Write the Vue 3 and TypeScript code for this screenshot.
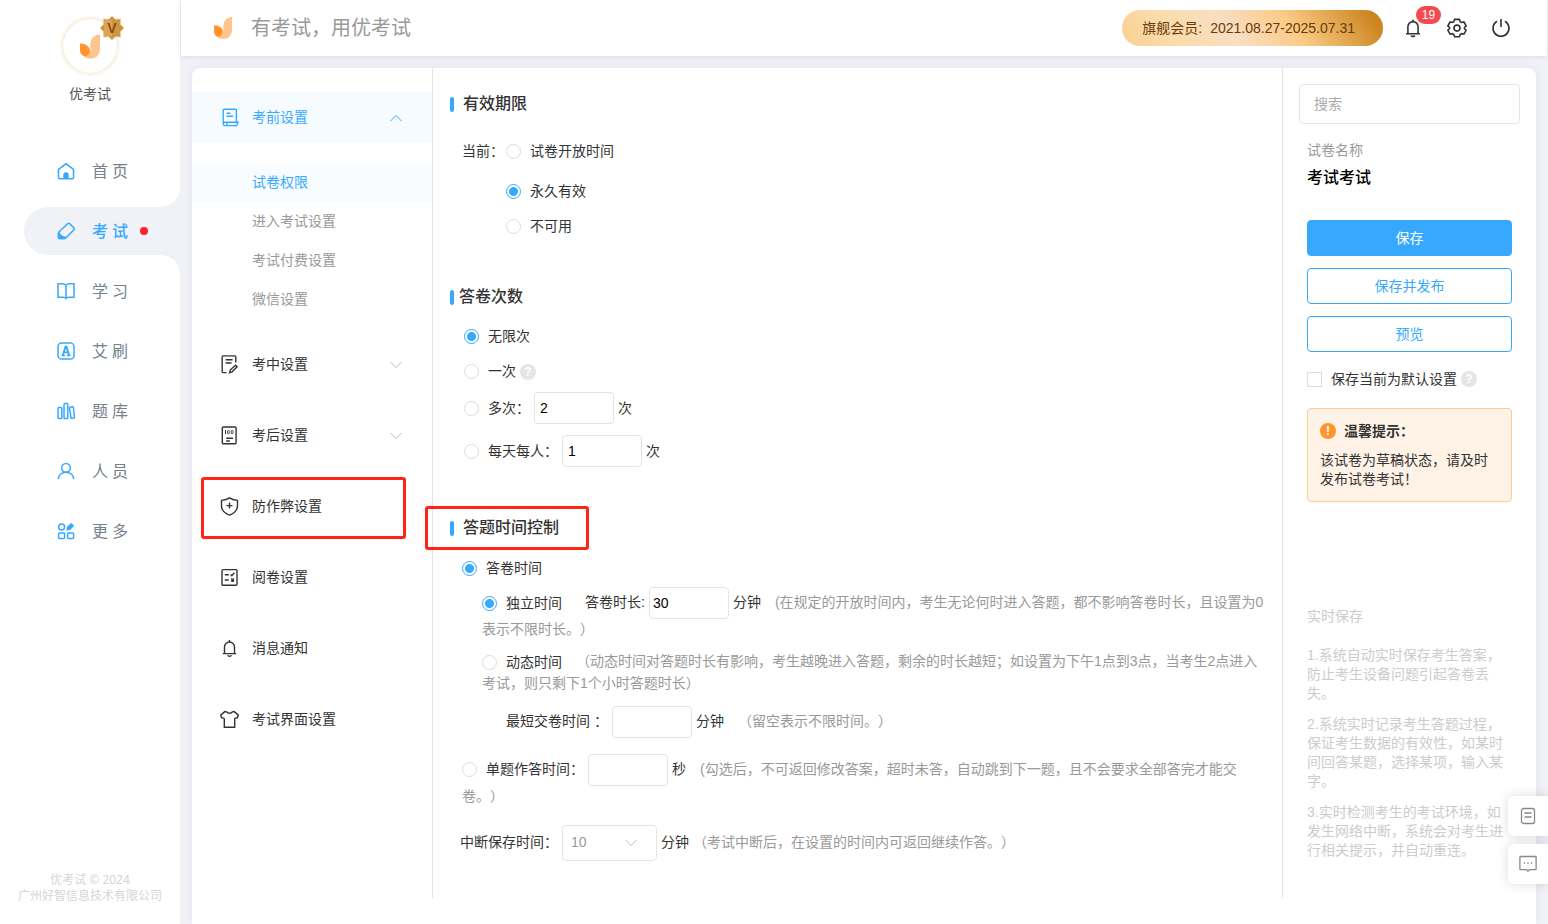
<script setup lang="ts">
import { ref } from 'vue'

interface MenuItem {
  label: string
  icon: string
  active?: boolean
  dot?: boolean
}

interface SettingItem {
  label: string
  icon: string
  open?: boolean
  expandable?: boolean
  marked?: boolean
  children?: string[]
}

const menu: MenuItem[] = [
  {
    label: '首页',
    icon: '<path d="M1.500 7.400 9 1.800l7.500 5.600v8.400a1 1 0 0 1-1 1h-13a1 1 0 0 1-1-1z"/><path d="M6.300 16.800v-3.900a2.700 2.700 0 0 1 5.400 0v3.900z" fill="currentColor" stroke="none"/>',
  },
  {
    label: '考试',
    icon: '<path d="M10.600 1.800a1.600 1.600 0 0 1 2.200 0l3.900 4a1.600 1.600 0 0 1 0 2.200l-7.400 7.600a2.400 2.400 0 0 1-1.800.8H3.200a1.800 1.800 0 0 1-1.800-1.800v-3.200a2.400 2.400 0 0 1 .7-1.700z"/><path d="M2 10c.4 2.600 2.500 4.700 5.800 5.200l-.8 1.300H3.300a1.800 1.800 0 0 1-1.800-1.800z" fill="currentColor"/>',
    active: true,
    dot: true,
  },
  {
    label: '学习',
    icon: '<path d="M9 3.200C8.300 2.200 7 1.800 5.500 1.800H1v13.400h5.200c1.300 0 2.300.3 2.800 1.200.5-.9 1.500-1.200 2.800-1.200H17V1.800h-4.500C11 1.800 9.700 2.200 9 3.200zM9 3.200v13"/>',
  },
  {
    label: '艾刷',
    icon: '<rect x="1" y="1" width="16" height="16" rx="3.600"/><path d="M4.600 13.400h3.200M10.200 13.400h3.200M5.800 13.200 8.500 4.800h1l2.700 8.400M6.800 10.400h4.400" stroke-width="1.900"/>',
  },
  {
    label: '题库',
    icon: '<rect x="1" y="5.400" width="3.800" height="11.200" rx=".8"/><rect x="7" y="1.600" width="3.800" height="15" rx=".8"/><path d="m13 5.200 2.600-.4c.4 0 .7.200.8.600l1 9.800c0 .5-.2.800-.6.900l-2 .3c-.4 0-.7-.2-.8-.6l-1.500-9.700c0-.5.100-.8.500-.9z"/>',
  },
  {
    label: '人员',
    icon: '<circle cx="9" cy="5.800" r="4.400"/><path d="M1.200 17.200c.5-4.200 3.700-7 7.800-7s7.300 2.800 7.800 7"/>',
  },
  {
    label: '更多',
    icon: '<circle cx="4.600" cy="4.900" r="3"/><rect x="1.600" y="11" width="6" height="5.600" rx="1"/><rect x="10.600" y="11" width="6" height="5.600" rx="1"/><path d="m10.800 5 2.900-2.700a.8.800 0 0 1 1.100 0l1 .9a.8.800 0 0 1 0 1.100L13 7.100l-2.700.6z" fill="currentColor"/>',
  },
]

const settings: SettingItem[] = [
  {
    label: '考前设置',
    icon: '<path d="M3.200 15.400V2.200a1 1 0 0 1 1-1h11.200a1 1 0 0 1 1 1v12M6.600 5.200h3.800M6.600 8.200h6.600M5 17.600a1.700 1.700 0 0 1 0-3.400h13c-.6 1-.6 2.400-1.400 3.400zM6.800 14.400v3"/>',
    open: true,
    expandable: true,
    children: ['试卷权限', '进入考试设置', '考试付费设置', '微信设置'],
  },
  {
    label: '考中设置',
    icon: '<path d="M6.500 17.600H3.200a1 1 0 0 1-1-1V1.900a1 1 0 0 1 1-1h11.600a1 1 0 0 1 1 1v5.600M5.600 4.800h7M5.600 8h6M9.600 17.600l.8-2.800 5.200-4.600 1.500 1.600-5 5z"/>',
    expandable: true,
  },
  {
    label: '考后设置',
    icon: '<rect x="2.300" y="1" width="13.800" height="16.800" rx="1"/><path d="M6.200 12.200h6.800M6.200 15h3.600"/><path d="M5.500 4v4" stroke-width="1"/><rect x="7.500" y="4.500" width="1.800" height="3.200" rx=".8" stroke-width=".9"/><rect x="11.200" y="4.500" width="1.800" height="3.200" rx=".8" stroke-width=".9"/>',
    expandable: true,
  },
  {
    label: '防作弊设置',
    icon: '<path d="M9.500.9c2 1.600 4.700 2.300 8 2.500v5.400c0 4.400-3.200 7.500-8 9.300-4.800-1.800-8-4.900-8-9.300V3.400c3.300-.2 6-.9 8-2.500zM9.500 5.600v6M6.500 8.600h6"/>',
    marked: true,
  },
  {
    label: '阅卷设置',
    icon: '<rect x="2" y="1.600" width="15" height="15.600" rx="1"/><path d="M4.800 6.800h4M4.800 12h4M10.600 6.600l1.200 1.200 2.600-3M11.200 10.600l2.800 2.800M14 10.600l-2.800 2.800"/>',
  },
  {
    label: '消息通知',
    icon: '<path d="M2.800 14.600h13.400M4.500 14.400V8a5 5 0 0 1 10 0v6.400M9.500 2.800V1M7.700 16.200c.3 1.600 3.300 1.600 3.600 0"/>',
  },
  {
    label: '考试界面设置',
    icon: '<path d="M6.600 1.800c1 2 4.800 2 5.800 0l1.800-.2 4.200 3.600-1.200 2.700c-1.600-.2-2.500.3-2.500 1.500v7.800H4.300V9.400c0-1.200-.9-1.700-2.500-1.500L.6 5.200l4.200-3.600z"/>',
  },
]

const activeChild = ref('试卷权限')
const keyword = ref('')
const validity = ref('forever')
const attempts = ref('unlimited')
const timing = ref('paper')
const timeMode = ref('single')
const multiCount = ref('2')
const dailyCount = ref('1')
const duration = ref('30')
const minSubmit = ref('')
const perQuestion = ref('')
const keepTime = ref('10')
const asDefault = ref(false)

const hints = [
  '1.系统自动实时保存考生答案，防止考生设备问题引起答卷丢失。',
  '2.系统实时记录考生答题过程，保证考生数据的有效性，如某时间回答某题，选择某项，输入某字。',
  '3.实时检测考生的考试环境，如发生网络中断，系统会对考生进行相关提示，并自动重连。',
]
</script>

<template>
  <div class="app">
    <aside class="sidebar">
      <div class="profile">
        <div class="avatar">
          <svg class="avatar-logo" viewBox="0 0 54 66">
            <path d="M54 0v40c0 17-12 26-26 26-9 0-17-4-21-10 12 4 21-2 21-13V27C28 12 37 2 54 0z" fill="#ffc48e" />
            <path d="M0 25c16 0 27 9 27 20 0 8-6 14-13 14S0 53 0 44z" fill="#ff952c" />
          </svg>
          <svg class="avatar-badge" viewBox="0 0 24 24">
            <path d="m12 0 3.300 3.200 5.200-.2-.1 5.200L24 12l-3.600 3.800.1 5.200-5.200-.2L12 24l-3.300-3.200-5.200.2.100-5.200L0 12l3.600-3.800L3.500 3l5.200.2z" fill="#cf9440" stroke="#e9cd95" stroke-width=".8" />
            <path d="M4 4h8v16H4z" fill="#dfb26a" opacity=".6" />
            <text x="12" y="17" text-anchor="middle">V</text>
          </svg>
        </div>
        <div class="profile-name">优考试</div>
      </div>
      <nav class="menu">
        <a v-for="item in menu" :key="item.label" href="#" class="menu-item" :class="{ active: item.active }">
          <svg class="menu-icon" viewBox="0 0 18 18" v-html="item.icon"></svg>
          <span class="menu-label">{{ item.label }}</span>
          <i v-if="item.dot" class="menu-dot"></i>
        </a>
      </nav>
      <footer class="copyright">优考试 © 2024<br />广州好智信息技术有限公司</footer>
    </aside>

    <div class="main">
      <header class="topbar">
        <svg class="brand-logo" viewBox="0 0 54 66">
          <path d="M54 0v40c0 17-12 26-26 26-9 0-17-4-21-10 12 4 21-2 21-13V27C28 12 37 2 54 0z" fill="#ffc48e" />
          <path d="M0 25c16 0 27 9 27 20 0 8-6 14-13 14S0 53 0 44z" fill="#ff952c" />
        </svg>
        <div class="slogan">有考试，用优考试</div>
        <div class="member"><span>旗舰会员:</span><span>2021.08.27-2025.07.31</span></div>
        <button type="button" class="tool" aria-label="通知">
          <svg viewBox="0 0 20 20">
            <path d="M3 15.800h14M4.900 15.600V8.700a5.100 5.100 0 0 1 10.200 0v6.900M10 3.400V1.600M8.200 17.400c.4 1.300 3.200 1.300 3.600 0" />
          </svg>
          <span class="count">19</span>
        </button>
        <button type="button" class="tool" aria-label="设置">
          <svg viewBox="0 0 20 20">
            <path d="M7.600 1.400h4.800l.8 2.300 1.300.8 2.400-.5 2.200 3.900-1.600 1.600v1.200l1.600 1.600-2.200 3.900-2.400-.5-1.300.8-.8 2.200H7.600l-.8-2.200-1.300-.8-2.400.5-2.200-3.900 1.600-1.600V9.500L.9 7.900 3.100 4l2.400.5 1.300-.8z" />
            <circle cx="10" cy="10.100" r="3" />
          </svg>
        </button>
        <button type="button" class="tool" aria-label="退出">
          <svg viewBox="0 0 20 20">
            <path d="M6 3.300a8 8 0 1 0 8 0M10 1v8" />
          </svg>
        </button>
      </header>

      <div class="card">
        <nav class="settings">
          <template v-for="item in settings" :key="item.label">
            <a href="#" class="setting" :class="{ open: item.open }">
              <svg class="setting-icon" viewBox="0 0 19 19" v-html="item.icon"></svg>
              <span>{{ item.label }}</span>
              <svg v-if="item.expandable" class="arrow" :class="{ up: item.open }" viewBox="0 0 12 8">
                <path d="M.5 1 6 6.500 11.500 1" />
              </svg>
              <i v-if="item.marked" class="mark mark-nav"></i>
            </a>
            <div v-if="item.children" class="children">
              <a
                v-for="child in item.children"
                :key="child"
                href="#"
                class="child"
                :class="{ active: child === activeChild }"
                @click.prevent="activeChild = child"
              >{{ child }}</a>
            </div>
          </template>
        </nav>

        <main class="form">
          <section>
            <h2 class="title">有效期限</h2>
            <div class="validity">
              <span>当前：</span>
              <div class="validity-options">
                <label class="option"><input v-model="validity" type="radio" name="validity" value="open" />试卷开放时间</label>
                <label class="option"><input v-model="validity" type="radio" name="validity" value="forever" />永久有效</label>
                <label class="option"><input v-model="validity" type="radio" name="validity" value="disabled" />不可用</label>
              </div>
            </div>
          </section>

          <section class="attempts">
            <h2 class="title tight">答卷次数</h2>
            <div class="line">
              <label class="option"><input v-model="attempts" type="radio" name="attempts" value="unlimited" />无限次</label>
            </div>
            <div class="line">
              <label class="option"><input v-model="attempts" type="radio" name="attempts" value="once" />一次</label>
              <span class="help">?</span>
            </div>
            <div class="line field">
              <label class="option"><input v-model="attempts" type="radio" name="attempts" value="many" />多次：</label>
              <input v-model="multiCount" class="box" type="text" aria-label="多次" />
              <span>次</span>
            </div>
            <div class="line field">
              <label class="option"><input v-model="attempts" type="radio" name="attempts" value="daily" />每天每人：</label>
              <input v-model="dailyCount" class="box" type="text" aria-label="每天每人" />
              <span>次</span>
            </div>
          </section>

          <section class="timing">
            <h2 class="title">答题时间控制<i class="mark mark-title"></i></h2>
            <div class="line">
              <label class="option"><input v-model="timing" type="radio" name="timing" value="paper" />答卷时间</label>
            </div>
            <div class="flow inner">
              <label class="option"><input v-model="timeMode" type="radio" name="mode" value="single" />独立时间</label>
              <label class="lead" for="duration">答卷时长:</label>
              <input id="duration" v-model="duration" class="box narrow" type="text" />
              <span>分钟</span>
              <span class="note">(在规定的开放时间内，考生无论何时进入答题，都不影响答卷时长，且设置为0表示不限时长。）</span>
            </div>
            <div class="flow inner">
              <label class="option"><input v-model="timeMode" type="radio" name="mode" value="dynamic" />动态时间</label>
              <span class="note">（动态时间对答题时长有影响，考生越晚进入答题，剩余的时长越短；如设置为下午1点到3点，当考生2点进入考试，则只剩下1个小时答题时长）</span>
            </div>
            <div class="flow inner shortest">
              <label for="min-submit">最短交卷时间 ：</label>
              <input id="min-submit" v-model="minSubmit" class="box" type="text" />
              <span>分钟</span>
              <span class="note">（留空表示不限时间。）</span>
            </div>
            <div class="flow per-question">
              <label class="option"><input v-model="timing" type="radio" name="timing" value="question" />单题作答时间：</label>
              <input v-model="perQuestion" class="box" type="text" aria-label="单题作答时间" />
              <span>秒</span>
              <span class="note">(勾选后，不可返回修改答案，超时未答，自动跳到下一题，且不会要求全部答完才能交卷。）</span>
            </div>
            <div class="line keep">
              <label for="keep">中断保存时间：</label>
              <span class="select">
                <select id="keep" v-model="keepTime">
                  <option value="10">10</option>
                  <option value="20">20</option>
                  <option value="30">30</option>
                </select>
                <svg class="arrow" viewBox="0 0 12 8"><path d="M.5 1 6 6.500 11.500 1" /></svg>
              </span>
              <span>分钟</span>
              <span class="note">（考试中断后，在设置的时间内可返回继续作答。）</span>
            </div>
          </section>
        </main>

        <aside class="panel">
          <input v-model="keyword" class="search" type="text" placeholder="搜索" aria-label="搜索" />
          <div class="panel-body">
            <div class="paper-label">试卷名称</div>
            <div class="paper-name">考试考试</div>
            <div class="actions">
              <button type="button" class="btn primary">保存</button>
              <button type="button" class="btn">保存并发布</button>
              <button type="button" class="btn">预览</button>
            </div>
            <div class="default-row">
              <label class="option"><input v-model="asDefault" type="checkbox" />保存当前为默认设置</label>
              <span class="help">?</span>
            </div>
            <div class="notice">
              <div class="notice-title"><span class="warn">!</span>温馨提示：</div>
              <div class="notice-text">该试卷为草稿状态，请及时发布试卷考试！</div>
            </div>
            <div class="hints">
              <div class="hints-title">实时保存</div>
              <p v-for="hint in hints" :key="hint">{{ hint }}</p>
            </div>
          </div>
        </aside>
      </div>
    </div>

    <div class="floating">
      <button type="button" aria-label="文档">
        <svg viewBox="0 0 18 18"><rect x="2.500" y="1.500" width="13" height="15" rx="2" /><path d="M5.500 6h7M5.500 10h7" /></svg>
      </button>
      <button type="button" aria-label="反馈">
        <svg viewBox="0 0 18 18"><path d="M1.500 1.500h15a.6.600 0 0 1 .6.600v12a.6.600 0 0 1-.6.600h-6L9 16.200l-1.500-1.500h-6a.6.600 0 0 1-.6-.6v-12a.6.600 0 0 1 .6-.6zM4.800 8h1.400M8.300 8h1.400M11.800 8h1.400" /></svg>
      </button>
    </div>
  </div>
</template>

<style>
body {
  margin: 0;
  background: #f1f2f7;
}
</style>

<style scoped>
.app {
  display: flex;
  min-height: 100vh;
  font-family: "Liberation Sans", "Noto Sans CJK SC", sans-serif;
  font-size: 14px;
  line-height: 21px;
  color: #333;
  text-spacing-trim: space-all;
}
.app *,
.app *::before,
.app *::after {
  box-sizing: border-box;
}
a {
  color: inherit;
  text-decoration: none;
}
button,
input,
select {
  margin: 0;
  font: inherit;
}
button {
  cursor: pointer;
}
svg {
  display: block;
  flex: none;
}

/* sidebar */
.sidebar {
  display: flex;
  flex: none;
  flex-direction: column;
  width: 180px;
  background: #fff;
}
.profile {
  display: flex;
  flex-direction: column;
  align-items: center;
  gap: 8px;
  height: 147px;
  padding-top: 16px;
}
.avatar {
  position: relative;
  display: flex;
  align-items: center;
  justify-content: center;
  width: 60px;
  height: 60px;
  border: 2px solid #fcf7ee;
  border-radius: 50%;
  box-shadow: inset 0 0 0 1px #f5e6cf;
}
.avatar-logo {
  width: 20px;
  height: 25px;
}
.avatar-badge {
  position: absolute;
  top: -2px;
  right: -6px;
  width: 24px;
  height: 24px;
}
.avatar-badge text {
  font-size: 14px;
  font-weight: 700;
  fill: #8a4d08;
}
.profile-name {
  color: #555;
}
.menu {
  display: flex;
  flex-direction: column;
  gap: 12px;
}
.menu-item {
  position: relative;
  display: flex;
  align-items: center;
  height: 48px;
  margin-left: 24px;
  padding-left: 33px;
  border-radius: 24px 0 0 24px;
  font-size: 16px;
  color: #75818d;
}
.menu-item.active {
  background: #f1f2f7;
  color: #36a9ff;
  font-weight: 500;
}
.menu-item.active::before,
.menu-item.active::after {
  content: "";
  position: absolute;
  right: 0;
  width: 20px;
  height: 20px;
}
.menu-item.active::before {
  bottom: 100%;
  background: radial-gradient(circle at 0 0, transparent 20px, #f1f2f7 20px);
}
.menu-item.active::after {
  top: 100%;
  background: radial-gradient(circle at 0 100%, transparent 20px, #f1f2f7 20px);
}
.menu-icon {
  width: 18px;
  height: 18px;
  margin-right: 17px;
  color: #36a9ff;
  fill: none;
  stroke: currentColor;
  stroke-width: 1.500;
}
.menu-label {
  letter-spacing: 4px;
}
.menu-dot {
  width: 8px;
  height: 8px;
  margin-left: 8px;
  border-radius: 50%;
  background: #ff1f2b;
}
.copyright {
  margin-top: auto;
  padding-bottom: 20px;
  font-family: "Noto Sans", "Noto Sans CJK SC", sans-serif;
  font-size: 12px;
  line-height: 16px;
  text-align: center;
  color: #d5d5d5;
}

/* top bar */
.main {
  display: flex;
  flex: 1;
  flex-direction: column;
  min-width: 0;
}
.topbar {
  display: flex;
  align-items: center;
  height: 56px;
  margin: 0 1px;
  padding: 0 36px 0 33px;
  background: #fff;
  box-shadow: 0 1px 6px rgba(30, 40, 90, 0.1);
}
.brand-logo {
  width: 18px;
  height: 22px;
}
.slogan {
  margin-left: 19px;
  font-size: 20px;
  line-height: 28px;
  color: #999;
}
.member {
  display: flex;
  align-items: center;
  gap: 8px;
  height: 36px;
  margin-left: auto;
  margin-right: 20px;
  padding: 0 28px 0 20px;
  border-radius: 18px;
  background: linear-gradient(55deg, #f9cf92 0%, #fbdcab 20%, #f9dec3 42%, #fbcb87 64%, #cd8722 94%, #c67f1a 100%);
  color: #6b3a08;
}
.tool {
  position: relative;
  width: 20px;
  height: 20px;
  margin-left: 24px;
  padding: 0;
  border: 0;
  background: none;
}
.member + .tool {
  margin-left: 0;
}
.tool svg {
  width: 20px;
  height: 20px;
  fill: none;
  stroke: #333;
  stroke-width: 1.600;
}
.count {
  position: absolute;
  top: -12px;
  left: 13px;
  width: 25px;
  height: 18px;
  border-radius: 9px;
  background: #f54b50;
  font-size: 12px;
  line-height: 18px;
  text-align: center;
  color: #fff;
}

/* card */
.card {
  display: flex;
  flex: 1;
  align-items: flex-start;
  margin: 12px 12px 0;
  padding-bottom: 24px;
  border-radius: 8px 8px 0 0;
  background: #fff;
  box-shadow: 0 0 8px rgba(30, 40, 90, 0.07);
}
.settings {
  flex: none;
  width: 240px;
  padding-top: 24px;
}
.setting {
  position: relative;
  display: flex;
  align-items: center;
  height: 51px;
  margin-bottom: 20px;
  padding: 0 30px 0 28px;
}
.setting.open {
  background: #f5fbff;
  color: #36a9ff;
}
.setting-icon {
  width: 19px;
  height: 19px;
  margin-right: 13px;
  fill: none;
  stroke: currentColor;
  stroke-width: 1.400;
}
.arrow {
  width: 12px;
  height: 8px;
  fill: none;
  stroke: #bbb;
}
.setting .arrow {
  margin-left: auto;
}
.arrow.up {
  stroke: #36a9ff;
  transform: rotate(180deg);
}
.children {
  margin-bottom: 20px;
}
.child {
  display: block;
  padding-left: 60px;
  line-height: 39px;
  color: #999;
}
.child.active {
  background: #f9fcff;
  color: #36a9ff;
}
.mark {
  position: absolute;
  border: 3px solid #ff2416;
  border-radius: 3px;
}
.mark-nav {
  inset: -4px 26px -7px 9px;
}
.mark-title {
  inset: -10px -30px -10px -25px;
}

/* form */
.form {
  flex: 1;
  min-width: 0;
  padding: 24px 16px 37px 17px;
  border-right: 1px solid #e4e4e4;
  border-left: 1px solid #e4e4e4;
}
.title {
  position: relative;
  display: flex;
  align-items: center;
  gap: 9px;
  width: fit-content;
  margin: 0;
  font-size: 16px;
  font-weight: 500;
  line-height: 24px;
}
.title.tight {
  gap: 5px;
}
.title::before {
  content: "";
  width: 4px;
  height: 15px;
  border-radius: 2px;
  background: #36a9ff;
}
.validity {
  display: flex;
  gap: 2px;
  margin: 25px 0 0 12px;
}
.validity-options {
  display: flex;
  flex-direction: column;
  gap: 14px;
}
.validity-options .option:first-child {
  margin-bottom: 5px;
}
.option {
  display: inline-flex;
  align-items: center;
  gap: 9px;
}
input[type="radio"],
input[type="checkbox"] {
  flex: none;
  width: 15px;
  height: 15px;
  border: 1px solid #d9dce3;
  background: #fff;
  appearance: none;
}
input[type="radio"] {
  border-radius: 50%;
}
input[type="radio"]:checked {
  border-color: #36a9ff;
  background: radial-gradient(circle, #36a9ff 4px, #fff 5px);
}
.attempts {
  margin-top: 48px;
}
.line {
  display: flex;
  align-items: center;
  gap: 4px;
}
.attempts .line {
  margin: 14px 0 0 14px;
}
.attempts .title + .line {
  margin-top: 17px;
}
.attempts .field {
  margin-top: 10px;
}
.attempts .field + .field {
  margin-top: 11px;
}
.help {
  display: inline-flex;
  align-items: center;
  justify-content: center;
  width: 16px;
  height: 16px;
  border-radius: 50%;
  background: #e5e5e5;
  font-size: 12px;
  font-weight: 700;
  line-height: 16px;
  color: #fff;
}
.box {
  width: 80px;
  height: 32px;
  padding: 0 5px;
  border: 1px solid #e4e4e4;
  border-radius: 4px;
  background: #fff;
  color: #000;
}
.box.narrow {
  padding: 0 3px;
}
.timing {
  margin-top: 49px;
}
.timing .line {
  margin: 18px 0 0 12px;
}
.timing .keep {
  margin-left: 10px;
}
.flow {
  margin: 11px 0 0 12px;
}
.flow.inner {
  margin-left: 32px;
}
.line + .flow {
  margin-top: 8px;
}
.flow .option {
  vertical-align: middle;
}
.flow .box {
  margin: 0 4px;
  vertical-align: middle;
}
.flow .lead {
  margin-left: 23px;
}
.flow.shortest {
  margin-top: 12px;
  padding-left: 24px;
}
.flow.per-question {
  margin-top: 16px;
}
.note {
  color: #999;
}
.flow .note {
  margin-left: 14px;
}
.select {
  position: relative;
  display: inline-flex;
}
.select select {
  width: 95px;
  height: 36px;
  padding: 0 8px;
  border: 1px solid #e4e4e4;
  border-radius: 4px;
  background: #fff;
  color: #999;
  appearance: none;
}
.select .arrow {
  position: absolute;
  top: 14px;
  right: 20px;
  pointer-events: none;
}

/* right panel */
.panel {
  flex: none;
  width: 253px;
  padding: 16px 16px 0;
}
.search {
  display: block;
  width: 100%;
  height: 40px;
  padding: 0 14px;
  border: 1px solid #e4e4e4;
  border-radius: 4px;
}
.search::placeholder {
  color: #aaa;
}
.panel-body {
  padding: 16px 8px 0;
  line-height: 20px;
}
.paper-label {
  color: #999;
}
.paper-name {
  margin-top: 6px;
  font-size: 16px;
  font-weight: 500;
  line-height: 24px;
  color: #000;
}
.actions {
  display: flex;
  flex-direction: column;
  gap: 12px;
  margin-top: 30px;
}
.btn {
  height: 36px;
  border: 1px solid #36a9ff;
  border-radius: 4px;
  background: #fff;
  color: #36a9ff;
}
.btn.primary {
  background: #36a9ff;
  color: #fff;
}
.default-row {
  display: flex;
  align-items: center;
  gap: 4px;
  margin: 17px 0 19px;
}
.notice {
  padding: 12px;
  border: 1px solid #ffc990;
  border-radius: 4px;
  background: #fff2e6;
}
.notice-title {
  display: flex;
  align-items: center;
  gap: 8px;
  font-weight: 700;
}
.warn {
  width: 16px;
  height: 16px;
  border-radius: 50%;
  background: #ff952c;
  font-size: 12px;
  line-height: 16px;
  text-align: center;
  color: #fff;
}
.notice-text {
  margin-top: 10px;
  line-height: 19px;
}
.hints {
  margin-top: 104px;
  color: #ccc;
}
.hints-title {
  margin-bottom: 20px;
}
.hints p {
  margin: 0 0 12px;
  line-height: 19px;
}

/* floating buttons */
.floating {
  position: fixed;
  right: 0;
  bottom: 40px;
  display: flex;
  flex-direction: column;
  gap: 8px;
}
.floating button {
  display: flex;
  align-items: center;
  justify-content: center;
  width: 40px;
  height: 40px;
  padding: 0;
  border: 0;
  border-radius: 6px 0 0 6px;
  background: #fff;
  box-shadow: 0 0 12px rgba(0, 0, 0, 0.15);
}
.floating svg {
  width: 18px;
  height: 18px;
  fill: none;
  stroke: #888;
  stroke-width: 1.300;
}
</style>
